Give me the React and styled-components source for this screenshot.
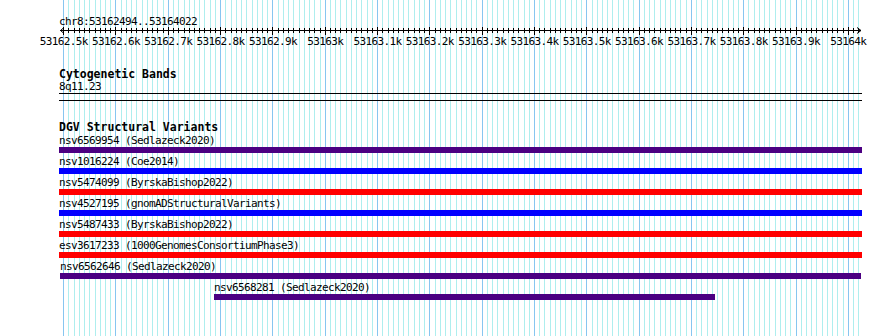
import styled, { createGlobalStyle } from "styled-components";

const BP_START = 53162494;
const BP_END = 53164022;
const X0 = 60.55;
const SCALE = 0.5231;

const toX = (bp) => X0 + (bp - BP_START) * SCALE;

const ticks = [];
for (let bp = 53162500; bp <= BP_END; bp += 10) {
  ticks.push({ bp, major: bp % 100 === 0, x: Math.floor(toX(bp)) });
}

const features = [
  { name: "nsv6569954", study: "Sedlazeck2020", color: "#4b0082", left: 0, width: 803 },
  { name: "nsv1016224", study: "Coe2014", color: "#0000ff", left: 0, width: 803 },
  { name: "nsv5474099", study: "ByrskaBishop2022", color: "#ff0000", left: 0, width: 803 },
  { name: "nsv4527195", study: "gnomADStructuralVariants", color: "#0000ff", left: 0, width: 803 },
  { name: "nsv5487433", study: "ByrskaBishop2022", color: "#ff0000", left: 0, width: 803 },
  { name: "esv3617233", study: "1000GenomesConsortiumPhase3", color: "#ff0000", left: 0, width: 803 },
  { name: "nsv6562646", study: "Sedlazeck2020", color: "#4b0082", left: 1, width: 801 },
  { name: "nsv6568281", study: "Sedlazeck2020", color: "#4b0082", left: 155, width: 501 },
];

const GlobalStyle = createGlobalStyle`
  body {
    margin: 0;
    background: #ffffff;
  }
`;

const Page = styled.div`
  position: relative;
  width: 890px;
  height: 336px;
  overflow: hidden;
  background: #ffffff;
  color: #000000;
  font-family: "DejaVu Sans Mono", "Liberation Mono", monospace;
  font-size: 11px;
  letter-spacing: -0.62px;
`;

const GridLayer = styled.svg`
  position: absolute;
  top: 0;
  left: 0;
  pointer-events: none;
`;

const Content = styled.div`
  position: relative;
`;

const Location = styled.div`
  padding: 16px 0 0 59px;
  height: 11px;
  line-height: 11px;
  white-space: nowrap;
`;

const RulerSvg = styled.svg`
  display: block;

  text {
    font-family: "DejaVu Sans Mono", "Liberation Mono", monospace;
    font-size: 11px;
    letter-spacing: -0.62px;
  }
`;

const Tracks = styled.div`
  width: 803px;
  padding-left: 59px;
  margin-top: 16px;
`;

const TrackTitle = styled.div`
  font-weight: bold;
  font-size: 11.5px;
  letter-spacing: 0;
  line-height: ${(p) => p.$lineHeight}px;
  white-space: nowrap;
`;

const BandLabel = styled.div`
  line-height: 13px;
  border-bottom: 1px solid #000000;
`;

const DgvTrack = styled.div`
  margin-top: 6px;
  padding-top: 20px;
  border-top: 1px solid #000000;
`;

const Feature = styled.div`
  display: flex;
  flex-direction: column;
  align-items: flex-start;
  margin-bottom: 2px;
`;

const FeatureLabel = styled.div`
  line-height: 13px;
  white-space: nowrap;
`;

const FeatureBar = styled.div`
  height: 6px;
  background: ${(p) => p.$color};
`;

const Ruler = () => (
  <RulerSvg width="890" height="25" shapeRendering="crispEdges">
    <line x1="60" y1="3.5" x2="861" y2="3.5" stroke="#000" />
    {ticks.map((t) => (
      <rect
        key={t.bp}
        x={t.x}
        y={t.major ? 0 : 1}
        width="1"
        height={t.major ? 8 : 5}
        fill="#000"
      />
    ))}
    <polyline points="64,0.5 60.5,3.5 64,6.5" fill="none" stroke="#000" shapeRendering="auto" />
    <polyline points="857,0.5 861,3.5 857,6.5" fill="none" stroke="#000" shapeRendering="auto" />
    {ticks
      .filter((t) => t.major || t.bp === 53162500)
      .map((t) => (
        <text key={t.bp} x={toX(t.bp)} y="18" textAnchor="middle" fill="#000">
          {`${t.bp / 1000}k`}
        </text>
      ))}
  </RulerSvg>
);

const Grid = () => (
  <GridLayer width="890" height="336" shapeRendering="crispEdges">
    {ticks.map((t) => (
      <rect
        key={t.bp}
        x={t.x}
        y="0"
        width="1"
        height="336"
        fill={t.major || t.bp === 53162500 ? "#87c6f0" : "#aeeeee"}
      />
    ))}
  </GridLayer>
);

export default function App() {
  return (
    <>
      <GlobalStyle />
      <Page>
        <Grid />
        <Content>
          <Location>chr8:53162494..53164022</Location>
          <Ruler />
          <Tracks>
            <TrackTitle $lineHeight={12}>Cytogenetic Bands</TrackTitle>
            <BandLabel>8q11.23</BandLabel>
            <DgvTrack>
              <TrackTitle $lineHeight={13}>DGV Structural Variants</TrackTitle>
              {features.map((f) => (
                <Feature key={f.name} style={{ paddingLeft: f.left }}>
                  <FeatureLabel>{`${f.name} (${f.study})`}</FeatureLabel>
                  <FeatureBar $color={f.color} style={{ width: f.width }} />
                </Feature>
              ))}
            </DgvTrack>
          </Tracks>
        </Content>
      </Page>
    </>
  );
}
